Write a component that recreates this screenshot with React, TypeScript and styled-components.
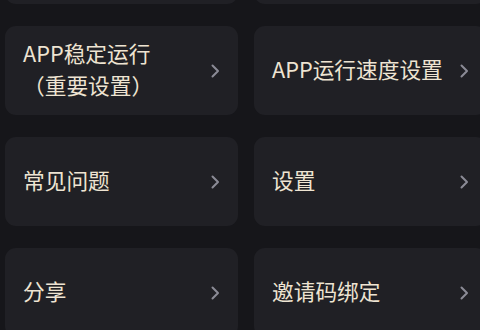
import styled, { createGlobalStyle } from 'styled-components';

const GlobalStyle = createGlobalStyle`
  html, body {
    margin: 0;
    padding: 0;
    background: #16161a;
    overflow: hidden;
  }
  body {
    font-family: "Noto Sans CJK SC", "Noto Sans", sans-serif;
  }
`;

const Page = styled.div`
  width: 480px;
  height: 330px;
  overflow: hidden;
  background: #16161a;
`;

const Grid = styled.div`
  display: grid;
  grid-template-columns: repeat(2, 233px);
  grid-auto-rows: 89px;
  column-gap: 16px;
  row-gap: 22px;
  padding-left: 5px;
  margin-top: -85px;
`;

const Card = styled.div`
  display: flex;
  align-items: center;
  justify-content: space-between;
  padding: 0 18px;
  border-radius: 11px;
  background: #202025;
`;

const Label = styled.span`
  color: #eee4d2;
  font-size: 21.7px;
  line-height: 32px;
  white-space: pre-line;
  margin-bottom: 4px;
`;

const Chevron = () => (
  <svg width="9" height="14" viewBox="0 0 9 14" fill="none">
    <path d="M1.5 1.5 L7 7 L1.5 12.5" stroke="#8b8b96" strokeWidth="2" strokeLinecap="round" strokeLinejoin="round" />
  </svg>
);

const items: (string | null)[] = [
  null,
  null,
  'APP稳定运行\n（重要设置）',
  'APP运行速度设置',
  '常见问题',
  '设置',
  '分享',
  '邀请码绑定',
];

export default function App() {
  return (
    <Page>
      <GlobalStyle />
      <Grid>
        {items.map((label, i) => (
          <Card key={i}>
            {label && (
              <>
                <Label>{label}</Label>
                <Chevron />
              </>
            )}
          </Card>
        ))}
      </Grid>
    </Page>
  );
}
